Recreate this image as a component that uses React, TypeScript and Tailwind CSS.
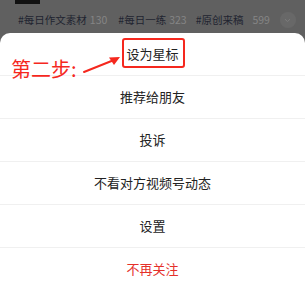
import React from "react";

const items = ["设为星标", "推荐给朋友", "投诉", "不看对方视频号动态", "设置", "不再关注"];

export default function App() {
  return (
    <div
      className="relative w-[305px] h-[289px] overflow-hidden bg-[#606060]"
      style={{ fontFamily: '"Noto Sans CJK SC", "Noto Sans", sans-serif' }}
    >
      <div className="h-[33px] relative">
        <div className="absolute left-[15px] top-0 w-[25px] h-[4px] bg-[#111]" />
        <div className="flex items-center h-full pt-[7px] pl-[18px] text-[10.5px] leading-none">
          <span className="text-[#1f2430]">#每日作文素材</span>
          <span className="ml-[3px] text-[#858585]">130</span>
          <span className="ml-[11px] text-[#1f2430]">#每日一练</span>
          <span className="ml-[3px] text-[#858585]">323</span>
          <span className="ml-[9px] text-[#1f2430]">#原创来稿</span>
          <span className="ml-[9px] text-[#858585]">599</span>
          <span className="ml-[10px] w-[16px] h-[16px] rounded-full bg-[#686868] flex items-center justify-center">
            <svg width="7" height="5" viewBox="0 0 7 5" fill="none">
              <path d="M1 1.2 L3.5 3.6 L6 1.2" stroke="#7d7d7d" strokeWidth="1" />
            </svg>
          </span>
        </div>
      </div>
      <div className="bg-white rounded-t-[10px] flex flex-col">
        {items.map((t, i) => (
          <div
            key={t}
            className={`h-[43px] flex items-center justify-center border-b border-[#f0f0f0] text-[13px] ${
              i === items.length - 1 ? "text-[#e5302a]" : "text-[#222]"
            }`}
          >
            {t}
          </div>
        ))}
      </div>
      <div className="absolute left-[122px] top-[38px] w-[63px] h-[30px] border-2 border-[#f5281e] rounded-[3px]" />
      <div className="absolute left-[11px] top-[56px] text-[20px] leading-[26px] text-[#f5281e]">第二步:</div>
      <svg className="absolute left-[82px] top-[52px]" width="42" height="24" viewBox="0 0 42 24">
        <path d="M2 20 L32 8" stroke="#f5281e" strokeWidth="2" strokeLinecap="round" />
        <path d="M38 5 L27 5.5 L32 13 Z" fill="#f5281e" />
      </svg>
    </div>
  );
}
